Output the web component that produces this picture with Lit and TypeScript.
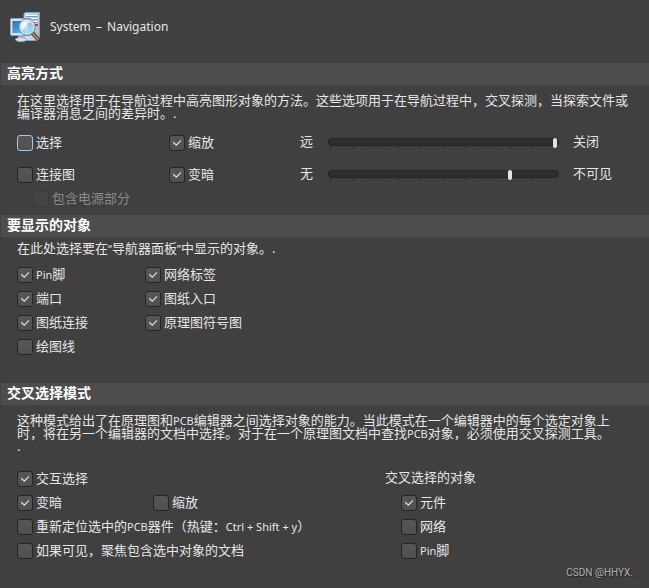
import { LitElement, html, css, svg } from "lit";
import { customElement, property } from "lit/decorators.js";

@customElement("check-option")
class CheckOption extends LitElement {
  @property({ type: Boolean }) checked = false;
  @property({ type: Boolean }) disabled = false;
  @property({ type: Boolean }) highlighted = false;

  static styles = css`
    :host {
      display: block;
    }
    .option {
      display: inline-flex;
      align-items: center;
      gap: 3px;
      height: 24px;
      line-height: 20px;
      white-space: nowrap;
    }
    .box {
      display: grid;
      width: 16px;
      height: 16px;
    }
    .input,
    .mark {
      grid-area: 1 / 1;
    }
    .input {
      appearance: none;
      box-sizing: border-box;
      width: 16px;
      height: 16px;
      margin: 0;
      border: 1px solid #252525;
      border-radius: 3px;
      background: linear-gradient(#575757, #505050);
    }
    .highlighted .input {
      border-color: #9cc8f2;
    }
    .disabled {
      color: #8a8a8a;
    }
    .disabled .input {
      border-color: #3b3b3b;
      background: #444444;
    }
    .mark {
      display: none;
      pointer-events: none;
    }
    .input:checked + .mark {
      display: block;
    }
    .text {
      display: block;
      padding-bottom: 2px;
    }
  `;

  render() {
    const state = this.disabled ? "disabled" : this.highlighted ? "highlighted" : "";
    return html`
      <label class="option ${state}">
        <span class="box">
          <input class="input" type="checkbox" .checked=${this.checked} ?disabled=${this.disabled} />
          <svg class="mark" width="16" height="16" viewBox="0 0 16 16" aria-hidden="true">
            <path d="M4.3 7.2 L7.3 10.1 L12 5.3" fill="none" stroke="#e2e2e2" stroke-width="1.2" />
          </svg>
        </span>
        <span class="text"><slot></slot></span>
      </label>
    `;
  }
}

const computerIcon = svg`
  <defs>
    <linearGradient id="screen" x1="0" y1="0" x2="1" y2="1">
      <stop offset="0" stop-color="#1b6fc4" />
      <stop offset="1" stop-color="#7cc4f4" />
    </linearGradient>
    <linearGradient id="tower" x1="0" y1="0" x2="1" y2="0">
      <stop offset="0" stop-color="#dce6ee" />
      <stop offset="1" stop-color="#aec2d2" />
    </linearGradient>
    <radialGradient id="lens" cx="0.65" cy="0.7" r="0.8">
      <stop offset="0" stop-color="#c3e6fb" />
      <stop offset="0.5" stop-color="#9fd0f0" />
      <stop offset="1" stop-color="#f4fafd" />
    </radialGradient>
  </defs>
  <path d="M14 2.5 L16 1.5 H29.5 V28 L28 29.5 H14 Z" fill="url(#tower)" stroke="#86a2ba" />
  <path d="M16 5.5 H27 M16 8.5 H27 M16 11.5 H27" stroke="#8296a9" />
  <path d="M16 4.5 H27 M16 7.5 H27 M16 10.5 H27" stroke="#ffffff" />
  <rect x="25" y="13" width="3" height="2" fill="#ee2a25" />
  <path d="M24 18 H28 M24 20 H28 M25 22 H28" stroke="#92a3b3" stroke-dasharray="1 1" />
  <rect x="0.5" y="7.5" width="21" height="17" rx="1" fill="#d2e2ef" stroke="#87a8c5" />
  <rect x="2.5" y="10" width="17" height="12" fill="url(#screen)" />
  <path d="M8 25 H15 V27 H8 Z" fill="#9eb8cd" />
  <ellipse cx="11" cy="28.5" rx="5.5" ry="2" fill="#d7e4ee" stroke="#91adc5" />
  <path d="M22.5 22 L28.5 28.5" stroke="#4d3324" stroke-width="4" stroke-linecap="round" />
  <path d="M22.5 22 L28 28" stroke="#a87c61" stroke-width="2.4" stroke-linecap="round" />
  <circle cx="17" cy="16" r="7.3" fill="url(#lens)" stroke="#dce2e6" stroke-width="1.4" />
  <circle cx="17" cy="16" r="8.2" fill="none" stroke="#5f7282" stroke-width="0.7" />
  <path d="M18.5 12 H21.5 V20.5 L18.5 22 Z" fill="#69b4e6" opacity="0.45" />
  <path d="M11.5 16 C11.5 12 14.5 10.2 17.5 10.2 C18 14 15.5 18 11.5 19 Z" fill="#ffffff" opacity="0.75" />
`;

@customElement("app-root")
class AppRoot extends LitElement {
  static styles = css`
    :host {
      display: block;
      min-height: 100vh;
      background: #404040;
      color: #e6e6e6;
      font-family: "Noto Sans", "Noto Sans CJK SC", sans-serif;
      font-size: 13px;
      line-height: 13px;
    }
    .header {
      display: flex;
      align-items: center;
      gap: 8px;
      height: 53px;
      padding: 0 10px;
    }
    .page-title {
      margin: 0;
      font-size: 12px;
      font-weight: 400;
      line-height: 20px;
    }
    .dash {
      margin: 0 2px;
    }
    .body {
      padding-top: 10px;
    }
    .bar {
      margin: 0 0 0 1px;
      padding: 0 6px 2px;
      background: #4d4d4d;
      color: #ffffff;
      font-size: 14px;
      font-weight: 700;
      line-height: 20px;
    }
    .content {
      padding: 9px 17px 4px;
    }
    .content.objects {
      padding: 5px 17px 24px;
    }
    .content.cross {
      padding-bottom: 0;
    }
    .description {
      margin: 0;
    }
    .latin {
      font-size: 11px;
    }
    .highlight {
      display: grid;
      grid-template-columns: 152px 131px 28px minmax(80px, 1fr) 73px;
      align-items: center;
      grid-auto-rows: 32px;
      padding-top: 7px;
    }
    .caption {
      padding-bottom: 4px;
      line-height: 20px;
    }
    .end {
      padding-left: 14px;
      white-space: nowrap;
    }
    .nested {
      padding-left: 16px;
      margin-top: -4px;
    }
    .slider {
      box-sizing: border-box;
      display: block;
      height: 10px;
      background:
        repeating-linear-gradient(90deg, #303030 0 2px, transparent 2px 10%) 2px 8px / calc(100% - 6px) 2px no-repeat;
    }
    .track {
      appearance: none;
      box-sizing: border-box;
      display: block;
      width: 100%;
      height: 8px;
      margin: 0;
      padding: 0 1px;
      border: 1px solid #242424;
      border-radius: 4px;
      background: #2e2e2e;
    }
    .track::-webkit-slider-thumb {
      appearance: none;
      width: 4px;
      height: 10px;
      margin-top: 2px;
      border-radius: 2px;
      background: #e3e3e3;
    }
    .object-grid {
      display: grid;
      grid-template-columns: 128px 1fr;
      padding-top: 8px;
    }
    .cross-grid {
      display: grid;
      grid-template-columns: 368px 1fr;
      padding-top: 14px;
    }
    .pair {
      display: grid;
      grid-template-columns: 136px 1fr;
    }
    .group {
      margin: 0;
      padding: 0;
      border: 0;
    }
    .legend {
      height: 24px;
      padding: 0;
      line-height: 20px;
    }
    .group check-option {
      padding-left: 16px;
    }
    .footer {
      padding-right: 16px;
      color: #b0b0b0;
      font-family: Roboto, sans-serif;
      font-size: 10px;
      line-height: 20px;
      text-align: right;
      text-shadow: 1px 1px 1px #1c1c1c;
    }
  `;

  render() {
    return html`
      <header class="header">
        <svg width="32" height="32" viewBox="0 0 32 32" aria-hidden="true">${computerIcon}</svg>
        <h1 class="page-title">System <span class="dash">–</span> Navigation</h1>
      </header>
      <main class="body">
        <section>
          <h2 class="bar">高亮方式</h2>
          <div class="content">
            <p class="description">在这里选择用于在导航过程中高亮图形对象的方法。这些选项用于在导航过程中，交叉探测，当探索文件或编译器消息之间的差异时。.</p>
            <div class="highlight">
              <check-option highlighted>选择</check-option>
              <check-option checked>缩放</check-option>
              <label class="caption" for="zoom-level">远</label>
              <span class="slider"><input class="track" id="zoom-level" type="range" min="0" max="10" value="10" /></span>
              <span class="caption end">关闭</span>
              <check-option>连接图</check-option>
              <check-option checked>变暗</check-option>
              <label class="caption" for="dim-level">无</label>
              <span class="slider"><input class="track" id="dim-level" type="range" min="0" max="10" value="8" /></span>
              <span class="caption end">不可见</span>
            </div>
            <check-option class="nested" disabled>包含电源部分</check-option>
          </div>
        </section>
        <section>
          <h2 class="bar">要显示的对象</h2>
          <div class="content objects">
            <p class="description">在此处选择要在<span class="latin">“</span>导航器面板<span class="latin">”</span>中显示的对象。.</p>
            <div class="object-grid">
              <check-option checked><span class="latin">Pin</span>脚</check-option>
              <check-option checked>网络标签</check-option>
              <check-option checked>端口</check-option>
              <check-option checked>图纸入口</check-option>
              <check-option checked>图纸连接</check-option>
              <check-option checked>原理图符号图</check-option>
              <check-option>绘图线</check-option>
            </div>
          </div>
        </section>
        <section>
          <h2 class="bar">交叉选择模式</h2>
          <div class="content cross">
            <p class="description">这种模式给出了在原理图和<span class="latin">PCB</span>编辑器之间选择对象的能力。当此模式在一个编辑器中的每个选定对象上时，将在另一个编辑器的文档中选择。对于在一个原理图文档中查找<span class="latin">PCB</span>对象，必须使用交叉探测工具。<br />.</p>
            <div class="cross-grid">
              <div>
                <check-option checked>交互选择</check-option>
                <div class="pair">
                  <check-option checked>变暗</check-option>
                  <check-option>缩放</check-option>
                </div>
                <check-option>重新定位选中的<span class="latin">PCB</span>器件（热键：<span class="latin">Ctrl + Shift + y</span>）</check-option>
                <check-option>如果可见，聚焦包含选中对象的文档</check-option>
              </div>
              <fieldset class="group">
                <legend class="legend">交叉选择的对象</legend>
                <check-option checked>元件</check-option>
                <check-option>网络</check-option>
                <check-option><span class="latin">Pin</span>脚</check-option>
              </fieldset>
            </div>
          </div>
        </section>
      </main>
      <footer class="footer">CSDN @HHYX.</footer>
    `;
  }
}
